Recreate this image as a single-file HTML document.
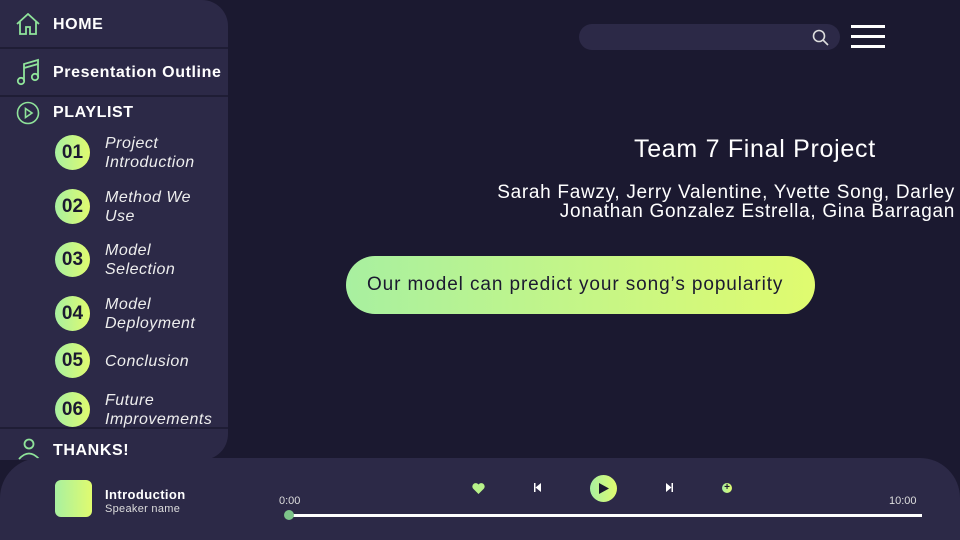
<!DOCTYPE html>
<html><head><meta charset="utf-8"><style>
*{margin:0;padding:0;box-sizing:border-box}
html,body{width:960px;height:540px;overflow:hidden}
body{background:#1b1930;font-family:"Liberation Sans",sans-serif;color:#fff;position:relative}
.side{position:absolute;left:0;top:0;width:228px;height:460px;background:#2c2947;border-radius:0 26px 26px 0}
.div{position:absolute;left:0;width:228px;height:2px;background:#1f1d35}
.nav{position:absolute;left:53px;font-weight:bold;font-size:16px;letter-spacing:0.6px}
.num{position:absolute;left:55px;width:35px;height:35px;border-radius:50%;background:linear-gradient(90deg,#a8f0a0,#e0fb6f);color:#1b1930;font-weight:bold;font-size:19px;text-align:center;line-height:35px}
.lbl{position:absolute;left:105px;font-style:italic;font-size:16px;line-height:19px;color:#eee;white-space:nowrap;letter-spacing:0.5px}
.bar{position:absolute;left:0;top:458px;width:960px;height:82px;background:#2c2947;border-radius:40px 40px 0 0}
.g{background:linear-gradient(90deg,#a8f0a0,#e0fb6f)}
</style></head><body>
<div class="side"></div>
<div class="div" style="top:47px"></div>
<div class="div" style="top:95px"></div>
<div class="div" style="top:427px"></div>
<svg style="position:absolute;left:15px;top:13px" width="26" height="22" viewBox="0 0 26 22"><path d="M2 11 L13 1 L24 11 M5 8 V21 H11 V14 H15 V21 H21 V8" fill="none" stroke="#8fe39a" stroke-width="1.8"/></svg>
<div class="nav" style="top:16px">HOME</div>
<svg style="position:absolute;left:16px;top:58px" width="24" height="28" viewBox="0 0 24 28"><path d="M8 23 V6 L22 2 V19 M8 10 L22 6" fill="none" stroke="#8fe39a" stroke-width="1.8"/><circle cx="5" cy="23" r="3.2" fill="none" stroke="#8fe39a" stroke-width="1.8"/><circle cx="19" cy="19" r="3.2" fill="none" stroke="#8fe39a" stroke-width="1.8"/></svg>
<div class="nav" style="top:64px">Presentation Outline</div>
<svg style="position:absolute;left:16px;top:101px" width="24" height="24" viewBox="0 0 24 24"><circle cx="12" cy="12" r="10.5" fill="none" stroke="#8fe39a" stroke-width="1.6"/><path d="M9.5 7.5 L16 12 L9.5 16.5Z" fill="none" stroke="#8fe39a" stroke-width="1.6"/></svg>
<div class="nav" style="top:104px">PLAYLIST</div>
<div class="num" style="top:135px">01</div><div class="lbl" style="top:134px">Project<br>Introduction</div>
<div class="num" style="top:189px">02</div><div class="lbl" style="top:188px">Method We<br>Use</div>
<div class="num" style="top:242px">03</div><div class="lbl" style="top:241px">Model<br>Selection</div>
<div class="num" style="top:296px">04</div><div class="lbl" style="top:295px">Model<br>Deployment</div>
<div class="num" style="top:343px">05</div><div class="lbl" style="top:352px">Conclusion</div>
<div class="num" style="top:392px">06</div><div class="lbl" style="top:391px">Future<br>Improvements</div>
<svg style="position:absolute;left:17px;top:438px" width="24" height="22" viewBox="0 0 24 22"><circle cx="12" cy="6" r="4.5" fill="none" stroke="#8fe39a" stroke-width="1.8"/><path d="M2 21 Q12 10 22 21" fill="none" stroke="#8fe39a" stroke-width="1.8"/></svg>
<div class="nav" style="top:442px">THANKS!</div>
<div class="bar"></div>
<div class="g" style="position:absolute;left:55px;top:480px;width:37px;height:37px;border-radius:6px"></div>
<div style="position:absolute;left:105px;top:487px;font-weight:bold;font-size:13px;letter-spacing:0.4px">Introduction</div>
<div style="position:absolute;left:105px;top:503px;font-size:11px;color:#ddd;letter-spacing:0.3px">Speaker name</div>
<div style="position:absolute;left:279px;top:495px;font-size:11px;color:#ddd">0:00</div>
<div style="position:absolute;left:889px;top:495px;font-size:11px;color:#ddd">10:00</div>
<div style="position:absolute;left:289px;top:514px;width:633px;height:3px;background:#fff"></div>
<div style="position:absolute;left:284px;top:510px;width:10px;height:10px;border-radius:50%;background:#7dc48a"></div>
<svg style="position:absolute;left:472px;top:483px" width="13" height="11" viewBox="0 0 13 11"><path d="M6.5 11 L1 5.5 A3 3 0 0 1 6.5 1.5 A3 3 0 0 1 12 5.5Z" fill="#b8f28a"/></svg>
<svg style="position:absolute;left:533px;top:483px" width="9" height="9" viewBox="0 0 9 9"><path d="M1 0V9H2.5V0Z M8 0 L2.5 4.5 L8 9Z" fill="#fff"/></svg>
<div class="g" style="position:absolute;left:590px;top:475px;width:27px;height:27px;border-radius:50%"></div>
<svg style="position:absolute;left:599px;top:483px" width="10" height="11" viewBox="0 0 10 11"><path d="M0 0 L10 5.5 L0 11Z" fill="#1b1930"/></svg>
<svg style="position:absolute;left:665px;top:483px" width="9" height="9" viewBox="0 0 9 9"><path d="M8 0V9H6.5V0Z M1 0 L6.5 4.5 L1 9Z" fill="#fff"/></svg>
<div class="g" style="position:absolute;left:722px;top:483px;width:10px;height:10px;border-radius:50%;color:#1b1930;font-size:10px;line-height:10px;text-align:center;font-weight:bold">+</div>
<div style="position:absolute;left:579px;top:24px;width:261px;height:26px;border-radius:13px;background:#2c2947"></div>
<svg style="position:absolute;left:812px;top:29px" width="18" height="18" viewBox="0 0 18 18"><circle cx="7" cy="7" r="5.5" fill="none" stroke="#ddd" stroke-width="1.6"/><path d="M11 11 L16 16" stroke="#ddd" stroke-width="1.6"/></svg>
<div style="position:absolute;left:851px;top:25px;width:34px;height:3px;background:#fff"></div>
<div style="position:absolute;left:851px;top:35px;width:34px;height:3px;background:#fff"></div>
<div style="position:absolute;left:851px;top:45px;width:34px;height:3px;background:#fff"></div>
<div style="position:absolute;left:634px;top:135px;font-size:25px;letter-spacing:0.7px;white-space:nowrap">Team 7 Final Project</div>
<div style="position:absolute;right:5px;top:183px;font-size:19px;line-height:19px;text-align:right;letter-spacing:0.7px;white-space:nowrap">Sarah Fawzy, Jerry Valentine, Yvette Song, Darley<br>Jonathan Gonzalez Estrella, Gina Barragan</div>
<div style="position:absolute;left:346px;top:256px;width:469px;height:58px;border-radius:29px;background:linear-gradient(90deg,#a8f0a0,#e0fb6f);color:#1b1930;font-size:19px;line-height:58px;padding-left:21px;letter-spacing:0.9px;white-space:nowrap">Our model can predict your song’s popularity</div>
</body></html>
